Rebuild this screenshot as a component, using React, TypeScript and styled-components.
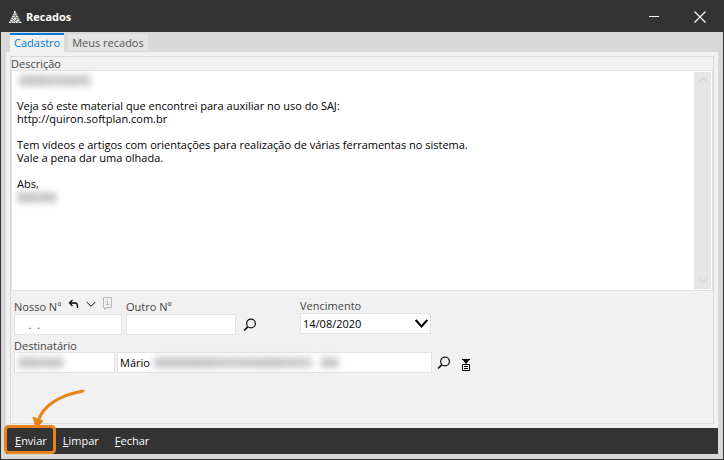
import React from "react";
import styled, { createGlobalStyle } from "styled-components";

const GlobalStyle = createGlobalStyle`
  * { box-sizing: border-box; }
  body { margin: 0; background: #d8d8d8; }
  body, button, input, textarea, select { font-family: "Open Sans", "Noto Sans", sans-serif; font-size: 11px; }
`;

const Window = styled.main`
  display: flex;
  flex-direction: column;
  min-height: 100vh;
  background: #d8d8d8;
  border: 1px solid #333;
  border-top: 0;
`;

const TitleBar = styled.header`
  display: flex;
  align-items: center;
  gap: 4px;
  height: 32px;
  padding: 2px 17px 0 7px;
  background: #333;
  color: #fff;
`;

const Title = styled.h1`
  flex: 1;
  margin: 0;
  font-size: 11px;
  line-height: 16px;
  font-weight: 700;
`;

const IconButton = styled.button`
  display: inline-flex;
  padding: 0;
  border: 0;
  background: none;
  color: inherit;
`;

const WindowControls = styled.div`
  display: flex;
  align-items: center;
  gap: 34px;
`;

const Body = styled.div`
  flex: 1;
  display: flex;
  flex-direction: column;
  padding: 0 5px 5px;
`;

const Tabs = styled.nav`
  display: flex;
  align-items: center;
  gap: 4px;
  height: 20px;
  padding: 1px 4px 0;
`;

const Tab = styled.button<{ $active?: boolean }>`
  height: ${(p) => (p.$active ? 19 : 17)}px;
  padding: ${(p) => (p.$active ? "0 4px 2px" : "0 4px")};
  border: 0;
  border-top: ${(p) => (p.$active ? "2px solid #0078d7" : "0")};
  background: ${(p) => (p.$active ? "#f1f1f1" : "#e3e3e1")};
  color: ${(p) => (p.$active ? "#0078d7" : "#555")};
  line-height: 15px;
`;

const Page = styled.section`
  flex: 1;
  display: flex;
  flex-direction: column;
  padding: 4px;
  background: #f1f1f1;
`;

const Frame = styled.form`
  flex: 1;
  display: flex;
  flex-direction: column;
  border: 1px solid #d8d8d8;
`;

const Label = styled.label`
  display: block;
  color: #444;
  line-height: 13px;
`;

const MessageBox = styled.div`
  position: relative;
  flex: 1;
  display: flex;
  padding: 1px 1px 1px 0;
  background: #fff;
  border: 1px solid #e2e2e2;
`;

const Message = styled.textarea`
  flex: 1;
  padding: 1px 5px;
  border: 0;
  outline: 0;
  resize: none;
  overflow: hidden;
  background: transparent;
  color: #000;
  line-height: 13px;
`;

const ScrollTrack = styled.div`
  display: flex;
  flex-direction: column;
  align-items: center;
  justify-content: space-between;
  width: 17px;
  padding: 5px 0;
  background: #e5e5e5;
  color: #c8c8c8;
`;

const Smudge = styled.span<{ $x: number; $y: number; $w: number }>`
  position: absolute;
  left: ${(p) => p.$x}px;
  top: ${(p) => p.$y}px;
  width: ${(p) => p.$w}px;
  height: 11px;
  background: linear-gradient(90deg, #cacaca, #c6c6c6 30%, #cfcfcf 50%, #c8c8c8 75%, #d2d2d2);
  filter: blur(3px);
  pointer-events: none;
`;

const Fields = styled.div`
  display: flex;
  flex-direction: column;
  gap: 4px;
  padding: 5px 3px 50px;
`;

const Row = styled.div`
  display: flex;
  align-items: flex-end;
`;

const Field = styled.div<{ $width: number }>`
  display: flex;
  flex-direction: column;
  width: ${(p) => p.$width}px;
  margin-right: 4px;
`;

const LabelRow = styled.div`
  display: flex;
  align-items: center;
  gap: 7px;
  height: 17px;
  padding-bottom: 1px;
  color: #111;

  ${Label} {
    align-self: flex-end;
  }

  ${IconButton} {
    height: 17px;
  }
`;

const InputBox = styled.div`
  position: relative;
  display: flex;
`;

const TextInput = styled.input`
  width: 100%;
  height: 21px;
  padding: 0 2px;
  border: 1px solid #e2e2e2;
  background: #fff;
  color: #000;
  line-height: 13px;
  outline: 0;
  white-space: pre;
`;

const CaseNumberInput = styled(TextInput)`
  color: #0f4c75;
`;

const DueField = styled(Field)`
  margin: 0 0 1px 43px;
`;

const DateSelect = styled.select`
  width: 100%;
  height: 21px;
  padding: 0 2px;
  border: 1px solid #e2e2e2;
  border-radius: 0;
  background: #fff;
  color: #000;
  appearance: none;
`;

const SelectArrow = styled.span`
  position: absolute;
  right: 3px;
  top: 6px;
  display: flex;
  pointer-events: none;
`;

const RecipientRow = styled.div`
  display: flex;
  align-items: center;
  gap: 2px;
`;

const RecipientBox = styled(InputBox)<{ $width: number }>`
  width: ${(p) => p.$width}px;
`;

const RowActions = styled.div`
  display: flex;
  align-items: center;
  gap: 10px;
  height: 21px;
  padding-left: 3px;
`;

const Footer = styled.footer`
  position: relative;
  display: flex;
  align-items: center;
  height: 26px;
  padding-left: 1px;
  background: #333;
`;

const Command = styled.button`
  padding: 0 8px;
  border: 0;
  background: none;
  color: #fff;
  line-height: 16px;
`;

const Annotation = styled.svg`
  position: absolute;
  left: -4px;
  top: -42px;
  pointer-events: none;
`;

const Logo = () => (
  <svg width="14" height="14" viewBox="0 0 14 14" aria-hidden="true">
    <path d="M7 0 .5 13h13z" fill="#888" />
    <path
      d="M6.500 1v2M5.500 4.500h1M7.500 4.500h1M4.500 6.500h2M8 6.500h1.500M3.500 8.500h1.500M6 8.500h2M9.500 8.500h1M2.500 10.500h2M6 10.500h1M8.500 10.500h2.500M1 12.500h2M4.500 12.500h2.500M8 12.500h1.500M11 12.500h2.500"
      stroke="#f4f4f4"
    />
    <path d="M7.500 2v3M5 9.500h1M7 9.500h1M4 11.500h1M7.500 11.500h2" stroke="#ccc" />
  </svg>
);

const Chevron = ({ w, h, s = 1 }: { w: number; h: number; s?: number }) => (
  <svg width={w} height={h} viewBox={`0 0 ${w} ${h}`} aria-hidden="true">
    <path d={`M.7 1 ${w / 2} ${h - 1.5} ${w - 0.7} 1`} fill="none" stroke="currentColor" strokeWidth={s} />
  </svg>
);

const Search = () => (
  <svg width="14" height="14" viewBox="0 0 14 14" aria-hidden="true">
    <circle cx="8" cy="5.500" r="4.400" fill="none" stroke="#111" strokeWidth="1.200" />
    <path d="M4.800 8.800 1 12.500" stroke="#111" strokeWidth="1.700" />
  </svg>
);

export default function App() {
  return (
    <>
      <GlobalStyle />
      <Window>
        <TitleBar>
          <Logo />
          <Title>Recados</Title>
          <WindowControls>
            <IconButton type="button" aria-label="Minimizar">
              <svg width="12" height="12"><path d="M1 5.500h10" stroke="#fff" /></svg>
            </IconButton>
            <IconButton type="button" aria-label="Fechar janela">
              <svg width="12" height="12"><path d="m.5.5 11 11m0-11-11 11" stroke="#fff" strokeWidth="1.200" /></svg>
            </IconButton>
          </WindowControls>
        </TitleBar>
        <Body>
          <Tabs>
            <Tab type="button" $active>Cadastro</Tab>
            <Tab type="button">Meus recados</Tab>
          </Tabs>
          <Page>
            <Frame onSubmit={(e) => e.preventDefault()} id="recado">
              <Label htmlFor="descricao">Descrição</Label>
              <MessageBox>
                <Message
                  id="descricao"
                  spellCheck={false}
                  defaultValue={"\n\nVeja só este material que encontrei para auxiliar no uso do SAJ:\nhttp://quiron.softplan.com.br\n\nTem vídeos e artigos com orientações para realização de várias ferramentas no sistema.\nVale a pena dar uma olhada.\n\nAbs,\n"}
                />
                <Smudge $x={7} $y={4} $w={72} />
                <Smudge $x={5} $y={121} $w={40} />
                <ScrollTrack>
                  <svg width="8" height="5"><path d="M.5 4.500 4 1l3.500 3.500" fill="none" stroke="currentColor" /></svg>
                  <Chevron w={8} h={6} />
                </ScrollTrack>
              </MessageBox>
              <Fields>
                <Row>
                  <Field $width={108}>
                    <LabelRow>
                      <Label htmlFor="nosso">Nosso Nº</Label>
                      <IconButton type="button" aria-label="Restaurar">
                        <svg width="11" height="14"><path d="M4.500 3 1.500 6l3 3M2 6h5.500q2 0 2 4v1" fill="none" stroke="#000" strokeWidth="1.300" /></svg>
                      </IconButton>
                      <IconButton type="button" aria-label="Opções">
                        <svg width="10" height="14"><path d="M.7 5 5 9.300 9.300 5" fill="none" stroke="#000" /></svg>
                      </IconButton>
                      <IconButton type="button" aria-label="Informações">
                        <svg width="10" height="13"><path d="M.5.5h8v10H4L1.500 12.500v-2h-1zM3.500 4.500h1v3M3 7.500h3M4.500 2v1" fill="none" stroke="#b5b5b5" /></svg>
                      </IconButton>
                    </LabelRow>
                    <CaseNumberInput id="nosso" defaultValue="    .  ." />
                  </Field>
                  <Field $width={110}>
                    <LabelRow><Label htmlFor="outro">Outro Nº</Label></LabelRow>
                    <TextInput id="outro" />
                  </Field>
                  <RowActions>
                    <IconButton type="button" aria-label="Pesquisar número"><Search /></IconButton>
                  </RowActions>
                  <DueField $width={131}>
                    <LabelRow><Label htmlFor="vencimento">Vencimento</Label></LabelRow>
                    <InputBox>
                      <DateSelect id="vencimento"><option>14/08/2020</option></DateSelect>
                      <SelectArrow><Chevron w={13} h={9} s={2} /></SelectArrow>
                    </InputBox>
                  </DueField>
                </Row>
                <div>
                  <Label htmlFor="destinatario">Destinatário</Label>
                  <RecipientRow>
                    <RecipientBox $width={101}>
                      <TextInput id="destinatario" />
                      <Smudge $x={4} $y={5} $w={46} />
                    </RecipientBox>
                    <RecipientBox $width={315}>
                      <TextInput aria-label="Nome do destinatário" defaultValue="Mário" />
                      <Smudge $x={37} $y={5} $w={158} />
                      <Smudge $x={204} $y={5} $w={18} />
                    </RecipientBox>
                    <RowActions>
                      <IconButton type="button" aria-label="Pesquisar destinatário"><Search /></IconButton>
                      <IconButton type="button" aria-label="Lista de destinatários">
                        <svg width="10" height="19"><path d="M1 6h8L5 11z" fill="#000" /><path d="M1.500 11.500h7v6h-7zM3 13.500h4M3 15.500h4M1 6.500h8" fill="none" stroke="#000" /></svg>
                      </IconButton>
                    </RowActions>
                  </RecipientRow>
                </div>
              </Fields>
            </Frame>
          </Page>
          <Footer>
            <Command type="submit" form="recado"><u>E</u>nviar</Command>
            <Command type="button"><u>L</u>impar</Command>
            <Command type="button"><u>F</u>echar</Command>
            <Annotation width="90" height="74" viewBox="0 0 90 74" aria-hidden="true">
              <rect x="3.500" y="40.500" width="49" height="26" rx="3" fill="none" stroke="#e8821a" strokeWidth="3" />
              <path d="M81 5Q44 12 36 35" fill="none" stroke="#e8821a" strokeWidth="3" strokeLinecap="round" />
              <path d="m31 31 10 4-7 7z" fill="#e8821a" stroke="#e8821a" strokeLinejoin="round" />
            </Annotation>
          </Footer>
        </Body>
      </Window>
    </>
  );
}
